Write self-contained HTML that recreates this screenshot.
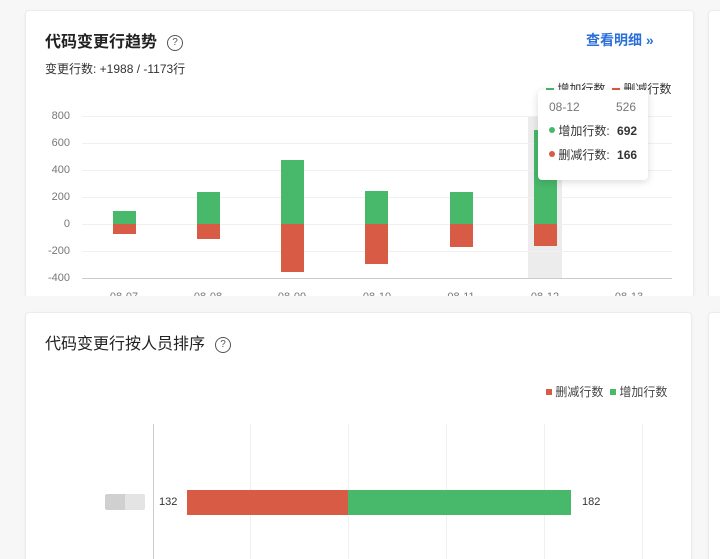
<!DOCTYPE html>
<html><head><meta charset="utf-8"><style>
html,body{margin:0;width:720px;height:559px;overflow:hidden}
body{background:#f7f7f8;font-family:"Liberation Sans","Noto Sans CJK SC",sans-serif;position:relative}
.card{position:absolute;background:#fff;border:1px solid #ececec;border-radius:4px;box-shadow:0 1px 3px rgba(0,0,0,.05)}
.a{position:absolute}
.t{font-size:16px;font-weight:bold;color:#222}
.q{display:inline-block;width:14px;height:14px;border:1.3px solid #555;border-radius:50%;font-size:10px;text-align:center;line-height:14px;color:#555;font-weight:normal;vertical-align:2px;margin-left:10px}
.yl{font-size:11px;color:#777;width:30px;text-align:right;left:40px}
.g{position:absolute;height:1px;background:#f0f0f0;left:82px;width:590px}
.bar{position:absolute;width:23px}
.gr{background:#48b86b}.rd{background:#d85b45}
.xl{position:absolute;top:291px;font-size:11px;color:#777;width:40px;text-align:center}
</style></head><body>
<div class="card" style="left:25px;top:10px;width:667px;height:286px"></div>
<div class="card" style="left:708px;top:10px;width:30px;height:286px"></div>
<div class="a t" style="left:45px;top:28px">代码变更行趋势<span class="q">?</span></div>
<div class="a" style="left:586px;top:30px;color:#2a6ed8;font-size:14px;font-weight:bold">查看明细 »</div>
<div class="a" style="left:45px;top:60px;font-size:12px;color:#333">变更行数: +1988 / -1173行</div>
<div class="a" style="left:528px;top:116px;width:34px;height:162px;background:#ececec"></div>
<div class="g" style="top:116px"></div><div class="g" style="top:143px"></div><div class="g" style="top:170px"></div><div class="g" style="top:197px"></div><div class="g" style="top:224px"></div><div class="g" style="top:251px"></div>
<div class="g" style="top:278px;background:#ccc"></div>
<div class="a yl" style="top:110px">800</div><div class="a yl" style="top:137px">600</div><div class="a yl" style="top:164px">400</div><div class="a yl" style="top:191px">200</div><div class="a yl" style="top:218px">0</div><div class="a yl" style="top:245px">-200</div><div class="a yl" style="top:272px">-400</div>
<div class="bar gr" style="left:113px;top:211px;height:13px"></div><div class="bar rd" style="left:113px;top:224px;height:10px"></div>
<div class="bar gr" style="left:197px;top:192px;height:32px"></div><div class="bar rd" style="left:197px;top:224px;height:15px"></div>
<div class="bar gr" style="left:281px;top:160px;height:64px"></div><div class="bar rd" style="left:281px;top:224px;height:48px"></div>
<div class="bar gr" style="left:365px;top:191px;height:33px"></div><div class="bar rd" style="left:365px;top:224px;height:40px"></div>
<div class="bar gr" style="left:450px;top:192px;height:32px"></div><div class="bar rd" style="left:450px;top:224px;height:23px"></div>
<div class="bar gr" style="left:534px;top:130px;height:94px"></div><div class="bar rd" style="left:534px;top:224px;height:22px"></div>
<div class="xl" style="left:104px">08-07</div><div class="xl" style="left:188px">08-08</div><div class="xl" style="left:272px">08-09</div><div class="xl" style="left:357px">08-10</div><div class="xl" style="left:441px">08-11</div><div class="xl" style="left:525px">08-12</div><div class="xl" style="left:609px">08-13</div>
<div class="a" style="left:546px;top:80px;font-size:12px;color:#333;white-space:nowrap"><span style="display:inline-block;width:8px;height:3px;background:#48b86b;vertical-align:middle"></span> 增加行数 &nbsp;<span style="display:inline-block;width:8px;height:3px;background:#d85b45;vertical-align:middle"></span> 删减行数</div>
<div class="a" style="left:538px;top:90px;width:110px;height:90px;background:#fff;border-radius:4px;box-shadow:0 2px 8px rgba(0,0,0,.15);font-size:12px;color:#333">
<div class="a" style="left:11px;top:10px;color:#777">08-12</div><div class="a" style="right:12px;top:10px;color:#777">526</div>
<div class="a" style="left:11px;top:32px"><span style="display:inline-block;width:6px;height:6px;border-radius:50%;background:#48b86b;vertical-align:2px"></span> 增加行数: <b style="margin-left:4px">692</b></div>
<div class="a" style="left:11px;top:56px"><span style="display:inline-block;width:6px;height:6px;border-radius:50%;background:#d85b45;vertical-align:2px"></span> 删减行数: <b style="margin-left:4px">166</b></div>
</div>
<div class="a" style="left:0;top:296px;width:720px;height:15px;background:#f7f7f8"></div>
<div class="card" style="left:25px;top:312px;width:665px;height:260px"></div>
<div class="card" style="left:708px;top:312px;width:30px;height:260px"></div>
<div class="a t" style="left:45px;top:330px;font-weight:normal;color:#222">代码变更行按人员排序<span class="q">?</span></div>
<div class="a" style="left:546px;top:383px;font-size:12px;color:#444"><span style="display:inline-block;width:6px;height:6px;background:#d85b45;vertical-align:1px"></span> 删减行数 &nbsp;<span style="display:inline-block;width:6px;height:6px;background:#48b86b;vertical-align:1px"></span> 增加行数</div>
<div class="a" style="left:153px;top:424px;width:1px;height:135px;background:#ccc"></div>
<div class="a" style="left:250px;top:424px;width:1px;height:135px;background:#f0f0f0"></div>
<div class="a" style="left:348px;top:424px;width:1px;height:135px;background:#f0f0f0"></div>
<div class="a" style="left:446px;top:424px;width:1px;height:135px;background:#f0f0f0"></div>
<div class="a" style="left:544px;top:424px;width:1px;height:135px;background:#f0f0f0"></div>
<div class="a" style="left:642px;top:424px;width:1px;height:135px;background:#f0f0f0"></div>
<div class="a" style="left:105px;top:494px;width:40px;height:16px;background:linear-gradient(90deg,#d0d0d0 50%,#e4e4e4 50%);border-radius:2px"></div>
<div class="a" style="left:159px;top:496px;font-size:11px;color:#333">132</div>
<div class="a rd" style="left:187px;top:490px;width:161px;height:25px"></div>
<div class="a gr" style="left:348px;top:490px;width:223px;height:25px"></div>
<div class="a" style="left:582px;top:496px;font-size:11px;color:#333">182</div>
</body></html>
